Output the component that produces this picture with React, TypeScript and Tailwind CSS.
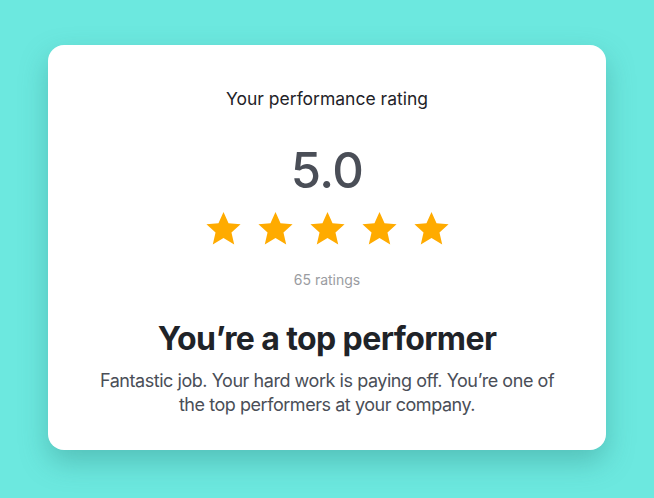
function StarIcon() {
  return (
    <svg viewBox="0 0 24 24" className="w-[39px] h-[39px]">
      <path
        d="M12 1.8l3.1 6.9 7.4.7-5.6 5 1.7 7.4L12 17.9l-6.6 3.9 1.7-7.4-5.6-5 7.4-.7z"
        fill="#ffab00"
      />
    </svg>
  );
}

export default function App() {
  return (
    <div className="w-[654px] h-[498px] bg-[#6ce8df] flex items-start justify-center pt-[45px] font-['Inter',sans-serif]">
      <div className="w-[558px] h-[405px] bg-white rounded-2xl shadow-[0_12px_28px_rgba(40,120,115,0.35)] flex flex-col items-center pt-[42px]">
        <p className="text-[17.5px] leading-6 text-[#1f2328]">Your performance rating</p>
        <p className="mt-[32px] text-[49px] leading-[56px] font-medium text-[#4a4e57] tracking-[-0.5px]">5.0</p>
        <div className="mt-[10px] flex gap-[13px]">
          {[0, 1, 2, 3, 4].map((i) => (
            <StarIcon key={i} />
          ))}
        </div>
        <p className="mt-[22px] text-[14px] leading-5 text-[#9a9ca1]">65 ratings</p>
        <h2 className="mt-[29px] text-[32px] leading-10 font-bold text-[#1f2328] tracking-[-0.6px]">You’re a top performer</h2>
        <p className="mt-[10px] text-[18px] leading-6 text-[#4a4e57] text-center w-[480px] tracking-[-0.45px]">
          Fantastic job. Your hard work is paying off. You’re one of the top performers at your company.
        </p>
      </div>
    </div>
  );
}
